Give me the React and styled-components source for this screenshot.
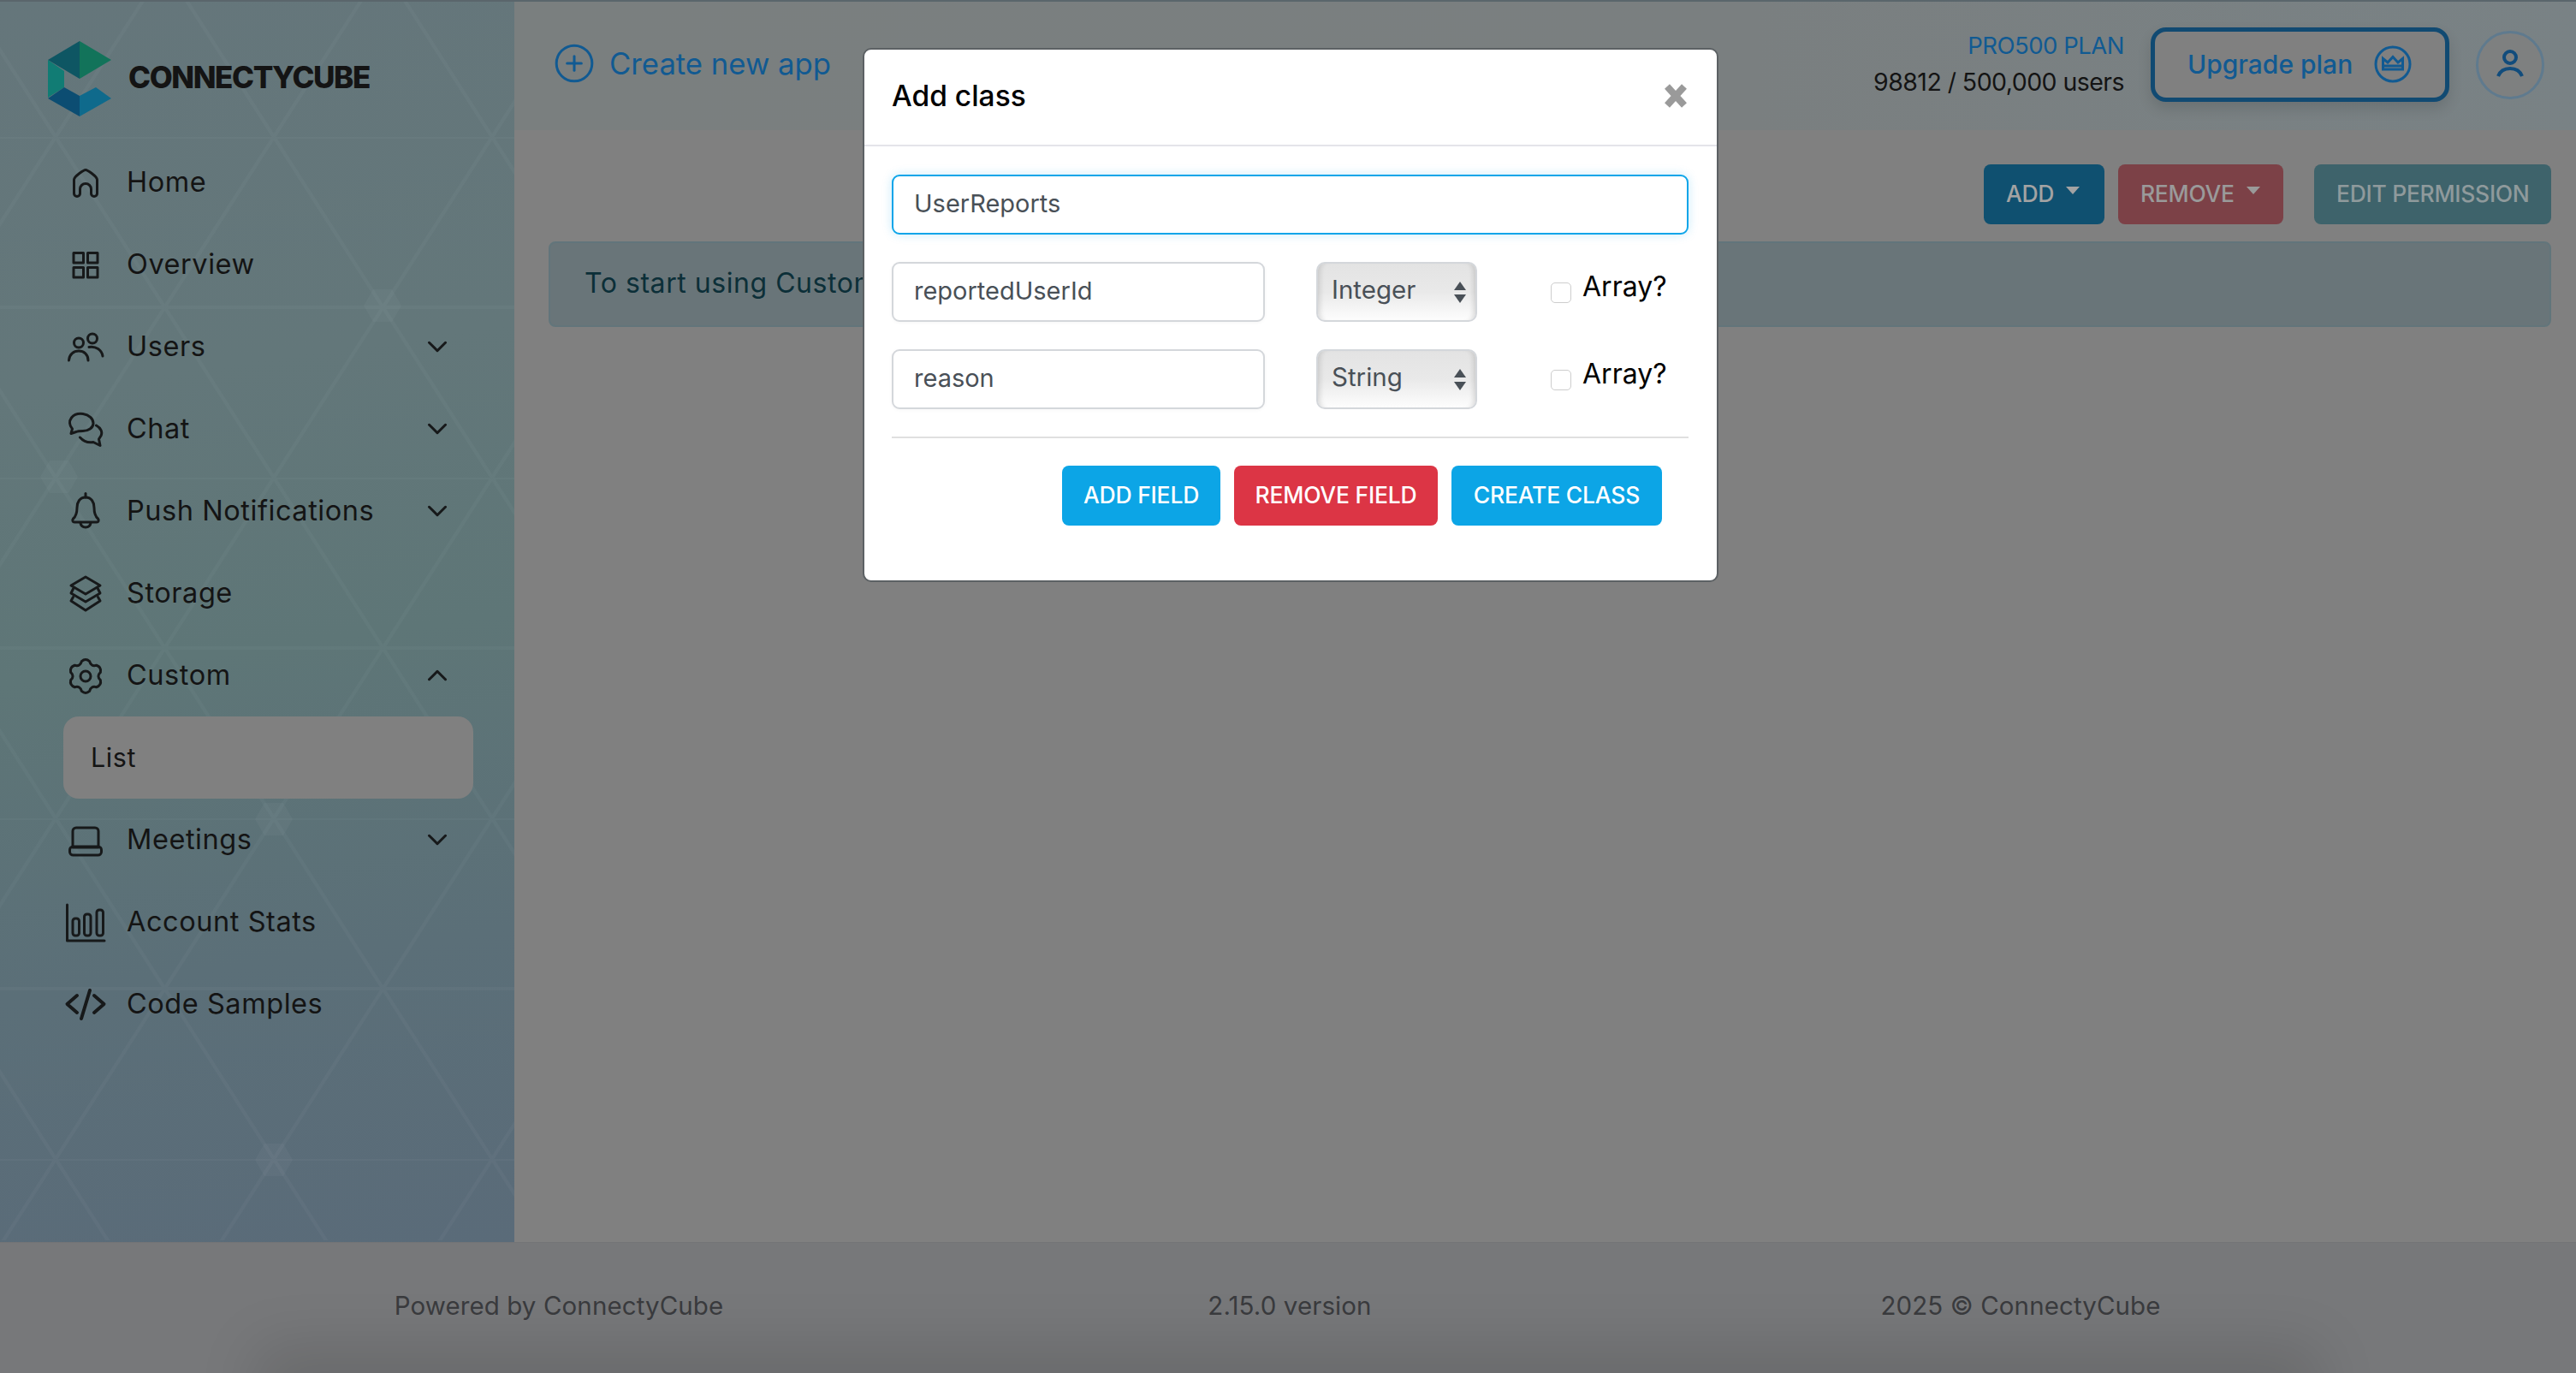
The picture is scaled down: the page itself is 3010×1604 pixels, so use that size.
import styled, { createGlobalStyle } from "styled-components";
import { ChevronDown, ChevronUp, CirclePlus } from "lucide-react";

const GlobalStyle = createGlobalStyle`
  * { box-sizing: border-box; }
  html, body { margin: 0; padding: 0; background: #808080; }
  body { font-family: Inter, "Noto Sans", "Liberation Sans", sans-serif; }
`;

const Page = styled.div`
  position: relative;
  width: 3010px;
  height: 1604px;
  overflow: hidden;
  display: flex;
  flex-direction: column;
  border-top: 2px solid #5a666c;
`;

const Top = styled.div`
  flex: 1;
  display: flex;
  min-height: 0;
`;

const Sidebar = styled.aside`
  position: relative;
  flex: 0 0 601px;
  background: linear-gradient(172deg, #65767b 0%, #63777a 30%, #5e7677 52%, #5b6f78 76%, #5a6b79 100%);
  overflow: hidden;
`;

const Lattice = styled.svg`
  position: absolute;
  top: -2px;
  left: 0;
  width: 601px;
  height: 1449px;
`;

const Brand = styled.div`
  position: relative;
  height: 163px;
  padding: 46px 0 0 56px;
  display: flex;
  align-items: flex-start;
  gap: 20px;
`;

const BrandName = styled.span`
  margin-top: 20px;
  font-size: 35px;
  line-height: 44px;
  font-weight: 800;
  letter-spacing: -1.4px;
  color: #141414;
`;

const Nav = styled.nav`
  position: relative;
  display: flex;
  flex-direction: column;
`;

const NavRow = styled.div`
  height: 96px;
  padding: 0 71px 0 76px;
  display: flex;
  align-items: center;
  gap: 24px;
  color: #141414;
  font-size: 32.5px;
  letter-spacing: 0.55px;
`;

const NavIcon = styled.svg`
  flex: 0 0 48px;
  width: 48px;
  height: 48px;
  overflow: visible;
  fill: none;
  stroke: #17191a;
  stroke-width: 3;
  stroke-linecap: round;
  stroke-linejoin: round;
`;

const NavLabel = styled.span`
  flex: 1;
  padding-bottom: 1px;
`;

const SubItem = styled.div`
  height: 96px;
  margin: 0 48px 0 74px;
  padding: 0 0 1px 32px;
  display: flex;
  align-items: center;
  background: #808080;
  border-radius: 18px;
  color: #141414;
  font-size: 30.5px;
  letter-spacing: 0.55px;
`;

const Main = styled.main`
  flex: 1;
  display: flex;
  flex-direction: column;
  min-width: 0;
`;

const Header = styled.header`
  height: 150px;
  padding: 0 37px 0 49px;
  display: flex;
  align-items: flex-start;
  background: linear-gradient(90deg, #7a7f7f 0%, #7a7f80 60%, #798285 100%);
`;

const CreateLink = styled.a`
  flex: 1;
  margin: 47px 0 0 -4px;
  display: flex;
  align-items: center;
  gap: 16px;
  color: #115a92;
  font-size: 34.7px;
  line-height: 44px;
  letter-spacing: 0;
`;

const PlanInfo = styled.div`
  margin: 31px 31px 0 0;
  text-align: right;
`;

const PlanName = styled.div`
  color: #115a92;
  font-size: 27.5px;
  line-height: 40px;
  letter-spacing: -0.5px;
`;

const PlanUsers = styled.div`
  margin-top: 2px;
  color: #141414;
  font-size: 28.5px;
  line-height: 42px;
  letter-spacing: -0.55px;
`;

const UpgradeButton = styled.div`
  width: 349px;
  height: 87px;
  margin-top: 30px;
  padding: 0 0 2px 38px;
  display: flex;
  align-items: center;
  gap: 25px;
  border: 5px solid #114a72;
  border-radius: 18px;
  background: #808080;
  box-shadow: 0 8px 16px rgba(0, 0, 0, 0.12);
  color: #115a92;
  font-size: 30px;
  font-weight: 500;
`;

const Avatar = styled.div`
  width: 80px;
  height: 80px;
  margin: 34px 0 0 31px;
  display: flex;
  align-items: center;
  justify-content: center;
  background: #7e8080;
  border: 3px solid #5f7a8e;
  border-radius: 50%;
`;

const Content = styled.div`
  flex: 1;
  padding: 40px 29px 0 40px;
  background: #808080;
`;

const ActionBar = styled.div`
  display: flex;
  justify-content: flex-end;
  gap: 16px;
  margin-bottom: 20px;
`;

const ActionButton = styled.div`
  width: ${(p) => p.$width}px;
  height: 70px;
  padding: 0 0 2px 26px;
  margin-left: ${(p) => (p.$detached ? "20px" : "0")};
  display: flex;
  align-items: center;
  gap: 14px;
  border-radius: 8px;
  background: ${(p) => p.$bg};
  color: ${(p) => p.$fg};
  font-size: 26.5px;
  font-weight: 500;
  letter-spacing: -0.3px;
`;

const Caret = styled.span`
  width: 0;
  height: 0;
  margin-bottom: 8px;
  border-left: 8px solid transparent;
  border-right: 8px solid transparent;
  border-top: 9px solid ${(p) => p.$color};
`;

const Alert = styled.div`
  height: 100px;
  padding: 0 40px 3px;
  display: flex;
  align-items: center;
  background: #697579;
  border: 2px solid #62757b;
  border-radius: 8px;
  color: #0c2f38;
  font-size: 32px;
  letter-spacing: 0.55px;
`;

const Footer = styled.footer`
  position: relative;
  flex: 0 0 153px;
  padding: 0 222px 6px 226px;
  display: grid;
  grid-template-columns: repeat(3, 1fr);
  align-items: center;
  overflow: hidden;
  background: #77787a;
  border-top: 1px solid #737476;
  color: #3a3b3e;
  font-size: 29.5px;
  letter-spacing: 0.1px;
  text-align: center;

  &::after {
    content: "";
    position: absolute;
    left: 330px;
    right: 330px;
    top: 100%;
    height: 40px;
    box-shadow: 0 0 70px 30px rgba(0, 0, 0, 0.12);
  }
`;

const Backdrop = styled.div`
  position: absolute;
  inset: 0;
  padding: 54px 0 0 6px;
  display: flex;
  justify-content: center;
  align-items: flex-start;
`;

const Modal = styled.div`
  width: 1000px;
  height: 624px;
  background: #fff;
  border: 2px solid #5c6164;
  border-radius: 10px;
  display: flex;
  flex-direction: column;
`;

const ModalHeader = styled.div`
  height: 113px;
  padding: 0 35px 3px 32px;
  display: flex;
  align-items: center;
  justify-content: space-between;
  border-bottom: 2px solid #e4e4ea;
`;

const ModalTitle = styled.h5`
  margin: 0;
  color: #000;
  font-size: 33.5px;
  font-weight: 500;
`;

const CloseIcon = styled.svg`
  width: 26px;
  height: 28px;
  fill: none;
  stroke: #9a9a9a;
  stroke-width: 8;
`;

const ModalBody = styled.div`
  padding: 33px 33px 0 32px;
  display: flex;
  flex-direction: column;
  gap: 32px;
`;

const TextField = styled.input`
  display: block;
  width: ${(p) => (p.$focused ? "100%" : "436px")};
  height: 70px;
  padding: 0 24px 3px;
  border: ${(p) => (p.$focused ? "2.5px solid #0ca5e9" : "2.5px solid #d4d7db")};
  border-radius: 9px;
  outline: none;
  box-shadow: ${(p) => (p.$focused ? "0 0 12px rgba(12, 165, 233, 0.22)" : "0 1px 4px rgba(0, 0, 0, 0.04)")};
  background: #fff;
  color: #495057;
  font-family: inherit;
  font-size: 29px;
`;

const FieldRow = styled.div`
  display: flex;
  align-items: flex-start;
`;

const SelectWrap = styled.div`
  position: relative;
  width: 188px;
  height: 70px;
  margin-left: 60px;
`;

const TypeSelect = styled.select`
  appearance: none;
  width: 100%;
  height: 100%;
  padding: 0 0 7px 16px;
  border: 2.5px solid #d4d7db;
  border-radius: 10px;
  outline: none;
  background: linear-gradient(180deg, #e3e3e3 0%, #e9e9e9 50%, #fdfdfd 100%);
  box-shadow: inset 7px 0 6px -5px rgba(0, 0, 0, 0.14), inset -7px 0 6px -5px rgba(0, 0, 0, 0.14);
  color: #495057;
  font-family: inherit;
  font-size: 29.5px;
`;

const SelectArrows = styled.svg`
  position: absolute;
  top: 23px;
  right: 13px;
  width: 14px;
  height: 25px;
  fill: #495057;
  pointer-events: none;
`;

const CheckBox = styled.input`
  appearance: none;
  width: 24px;
  height: 24px;
  margin: 24px 13px 0 86px;
  background: #fff;
  border: 1.5px solid #cdcdcd;
  border-radius: 5px;
`;

const CheckLabel = styled.label`
  margin-top: 6px;
  color: #000;
  font-size: 32px;
  line-height: 46px;
`;

const Rule = styled.hr`
  margin: 0;
  border: 0;
  border-top: 2px solid #e0e0e0;
`;

const ModalActions = styled.div`
  display: flex;
  justify-content: flex-end;
  gap: 16px;
  padding-right: 31px;
`;

const ModalButton = styled.div`
  width: ${(p) => p.$width}px;
  height: 70px;
  padding-bottom: 3px;
  display: flex;
  align-items: center;
  justify-content: center;
  border-radius: 8px;
  background: ${(p) => p.$bg};
  color: #fff;
  font-size: 26.5px;
  font-weight: 500;
  letter-spacing: -0.2px;
`;

const gearPoint = (deg, r) => {
  const a = (deg * Math.PI) / 180;
  return `${(24 + r * Math.cos(a)).toFixed(2)} ${(25 + r * Math.sin(a)).toFixed(2)}`;
};

// six rounded lobes, same outline as the sidebar gear
const gearPath = () => {
  let d = `M${gearPoint(-105, 18)}`;
  for (let i = 0; i < 6; i++) {
    const a = -90 + i * 60;
    d += ` Q${gearPoint(a, 21.5)} ${gearPoint(a + 15, 18)}`;
    d += ` Q${gearPoint(a + 30, 12.5)} ${gearPoint(a + 45, 18)}`;
  }
  return d + "Z";
};

const navIcons = {
  home: <path d="M24 9.5C26 9.5 37.5 17 37.5 21V37a3.5 3.5 0 0 1-7 0V32a6.5 6.5 0 0 0-13 0V37a3.5 3.5 0 0 1-7 0V21C10.5 17 22 9.5 24 9.5Z" />,
  grid: (
    <>
      <rect x="10" y="10.5" width="11.5" height="11.5" />
      <rect x="26.5" y="10.5" width="11.5" height="11.5" />
      <rect x="10" y="27.5" width="11.5" height="11.5" />
      <rect x="26.5" y="27.5" width="11.5" height="11.5" />
    </>
  ),
  users: (
    <>
      <circle cx="16" cy="19.5" r="5.5" />
      <circle cx="32" cy="14.5" r="5.5" />
      <path d="M4.5 40C5 33 10 29 16 29C22 29 27 33 27 40" />
      <path d="M28 24.5C36 23 43 28 44 35" />
    </>
  ),
  chat: (
    <>
      <path d="M8.5 24C5 20 4.5 15 7.5 11C11 6.5 17 6 21 6.5C28 7.5 33 12 33 17.5C33 23 27 26.5 21 26.5C17 26.5 15 26.5 13 27.5L7 29.5Z" />
      <path d="M36.5 20C42 23 44 28 42 32L39.5 36L41 43.5L33 39.5C27 40.5 21 38 17.5 34" />
    </>
  ),
  bell: (
    <>
      <path d="M24 3.5V8" />
      <path d="M24 8C17 8 14 14 14 20C14 27 13 30 9.5 33C8 35 9 37 11 37H37C39 37 40 35 38.5 33C35 30 34 27 34 20C34 14 31 8 24 8Z" />
      <path d="M18 38C19 44.5 29 44.5 30 38" />
    </>
  ),
  layers: (
    <>
      <path d="M24 5L41 15L24 25L7 15Z" />
      <path d="M9.5 19L7 24L24 34L41 24L38.5 19" />
      <path d="M9.5 28.5L7 33L24 44L41 33L38.5 28.5" />
    </>
  ),
  gear: (
    <>
      <path d={gearPath()} />
      <circle cx="24" cy="25" r="6" />
    </>
  ),
  laptop: (
    <>
      <path d="M9 32V14a4 4 0 0 1 4-4H35a4 4 0 0 1 4 4V32" />
      <rect x="5.5" y="32" width="37" height="10" rx="4" />
      <path d="M9 33H39" />
    </>
  ),
  stats: (
    <>
      <path d="M2.5 4V46H46" />
      <rect x="9" y="20" width="7.5" height="20" rx="3" />
      <rect x="22.5" y="15" width="7.5" height="25" rx="3" />
      <rect x="37" y="10" width="7.5" height="30" rx="3" />
    </>
  ),
  code: (
    <>
      <path d="M14 14L2.5 24L14 34" strokeWidth="4" />
      <path d="M34 14L45.5 24L34 34" strokeWidth="4" />
      <path d="M29 8L19 41" strokeWidth="4" />
    </>
  ),
};

const navItems = [
  { label: "Home", icon: "home" },
  { label: "Overview", icon: "grid" },
  { label: "Users", icon: "users", arrow: "down" },
  { label: "Chat", icon: "chat", arrow: "down" },
  { label: "Push Notifications", icon: "bell", arrow: "down" },
  { label: "Storage", icon: "layers" },
  { label: "Custom", icon: "gear", arrow: "up", sub: "List" },
  { label: "Meetings", icon: "laptop", arrow: "down" },
  { label: "Account Stats", icon: "stats" },
  { label: "Code Samples", icon: "code" },
];

const hexNodes = [
  [447, 357],
  [69, 557],
  [320, 957],
  [320, 1355],
];

const hexPoints = (x, y) =>
  [0, 60, 120, 180, 240, 300]
    .map((d) => `${x + 22 * Math.cos((d * Math.PI) / 180)},${y + 22 * Math.sin((d * Math.PI) / 180)}`)
    .join(" ");

const LatticeBackground = () => (
  <Lattice viewBox="0 0 601 1449">
    <defs>
      <pattern id="lattice" x="65" y="160" width="255" height="398" patternUnits="userSpaceOnUse">
        <path
          d="M0 0H255M0 199H255M0 0L127.5 199L255 0M127.5 199L0 398M127.5 199L255 398"
          fill="none"
          stroke="rgba(255,255,255,0.028)"
          strokeWidth="4"
        />
      </pattern>
    </defs>
    <rect width="601" height="1449" fill="url(#lattice)" />
    {hexNodes.map(([x, y]) => (
      <polygon key={x + "-" + y} points={hexPoints(x, y)} fill="rgba(255,255,255,0.03)" />
    ))}
  </Lattice>
);

const Logo = () => (
  <svg width="74" height="90" viewBox="56 48 74 90">
    <polygon points="56,70 93,48 93,92" fill="#0e5663" />
    <polygon points="93,48 130,70 93,92" fill="#12735a" />
    <polygon points="56,70 75,83 75,102 56,114" fill="#117c74" />
    <polygon points="56,115 75,102 93,112 93,136" fill="#0c4d72" />
    <polygon points="93,112 112,102 130,115 93,136" fill="#0f6a8c" />
  </svg>
);

const FieldLine = ({ name, type }) => (
  <FieldRow>
    <TextField value={name} readOnly />
    <SelectWrap>
      <TypeSelect value={type} onChange={() => {}}>
        <option>Integer</option>
        <option>String</option>
      </TypeSelect>
      <SelectArrows viewBox="0 0 14 25">
        <path d="M7 0L14 10H0Z" />
        <path d="M7 25L0 15H14Z" />
      </SelectArrows>
    </SelectWrap>
    <CheckBox type="checkbox" />
    <CheckLabel>Array?</CheckLabel>
  </FieldRow>
);

const App = () => {
  return (
    <>
      <GlobalStyle />
      <Page>
        <Top>
          <Sidebar>
            <LatticeBackground />
            <Brand>
              <Logo />
              <BrandName>CONNECTYCUBE</BrandName>
            </Brand>
            <Nav>
              {navItems.map((item) => (
                <div key={item.label}>
                  <NavRow>
                    <NavIcon viewBox="0 0 48 48">{navIcons[item.icon]}</NavIcon>
                    <NavLabel>{item.label}</NavLabel>
                    {item.arrow === "down" && <ChevronDown size={38} strokeWidth={1.9} color="#17191a" />}
                    {item.arrow === "up" && <ChevronUp size={38} strokeWidth={1.9} color="#17191a" />}
                  </NavRow>
                  {item.sub && <SubItem>{item.sub}</SubItem>}
                </div>
              ))}
            </Nav>
          </Sidebar>
          <Main>
            <Header>
              <CreateLink>
                <CirclePlus size={50} strokeWidth={1.45} color="#115a92" />
                Create new app
              </CreateLink>
              <PlanInfo>
                <PlanName>PRO500 PLAN</PlanName>
                <PlanUsers>98812 / 500,000 users</PlanUsers>
              </PlanInfo>
              <UpgradeButton>
                Upgrade plan
                <svg width="44" height="44" viewBox="0 0 44 44" fill="none" stroke="#115a92" strokeWidth="3">
                  <circle cx="22" cy="22" r="20" />
                  <path d="M10.5 15.5L16 20L22 13.5L28 20L33.5 15.5V28H10.5Z" />
                  <path d="M10.5 24H33.5" />
                </svg>
              </UpgradeButton>
              <Avatar>
                <svg width="44" height="44" viewBox="0 0 44 44" fill="none" stroke="#114c7c" strokeWidth="4">
                  <circle cx="22" cy="13" r="7" />
                  <path d="M8 35C10.5 28.5 16 26 22 26C28 26 33.5 28.5 36 35" />
                </svg>
              </Avatar>
            </Header>
            <Content>
              <ActionBar>
                <ActionButton $width={141} $bg="#0f5070" $fg="#a3a3a3">
                  ADD <Caret $color="#a3a3a3" />
                </ActionButton>
                <ActionButton $width={193} $bg="#7c4147" $fg="#9a9a9a">
                  REMOVE <Caret $color="#9a9a9a" />
                </ActionButton>
                <ActionButton $width={277} $bg="#3e636b" $fg="#8f9a9c" $detached>
                  EDIT PERMISSION
                </ActionButton>
              </ActionBar>
              <Alert>To start using Custom Objects, add a new class</Alert>
            </Content>
          </Main>
        </Top>
        <Footer>
          <span>Powered by ConnectyCube</span>
          <span>2.15.0 version</span>
          <span>2025 © ConnectyCube</span>
        </Footer>
        <Backdrop>
          <Modal>
            <ModalHeader>
              <ModalTitle>Add class</ModalTitle>
              <CloseIcon viewBox="0 0 26 28">
                <path d="M3 3L23 25M23 3L3 25" />
              </CloseIcon>
            </ModalHeader>
            <ModalBody>
              <TextField $focused value="UserReports" readOnly />
              <FieldLine name="reportedUserId" type="Integer" />
              <FieldLine name="reason" type="String" />
              <Rule />
              <ModalActions>
                <ModalButton $width={185} $bg="#0ca5e6">ADD FIELD</ModalButton>
                <ModalButton $width={238} $bg="#dc3545">REMOVE FIELD</ModalButton>
                <ModalButton $width={246} $bg="#0ca5e6">CREATE CLASS</ModalButton>
              </ModalActions>
            </ModalBody>
          </Modal>
        </Backdrop>
      </Page>
    </>
  );
};

export default App;
